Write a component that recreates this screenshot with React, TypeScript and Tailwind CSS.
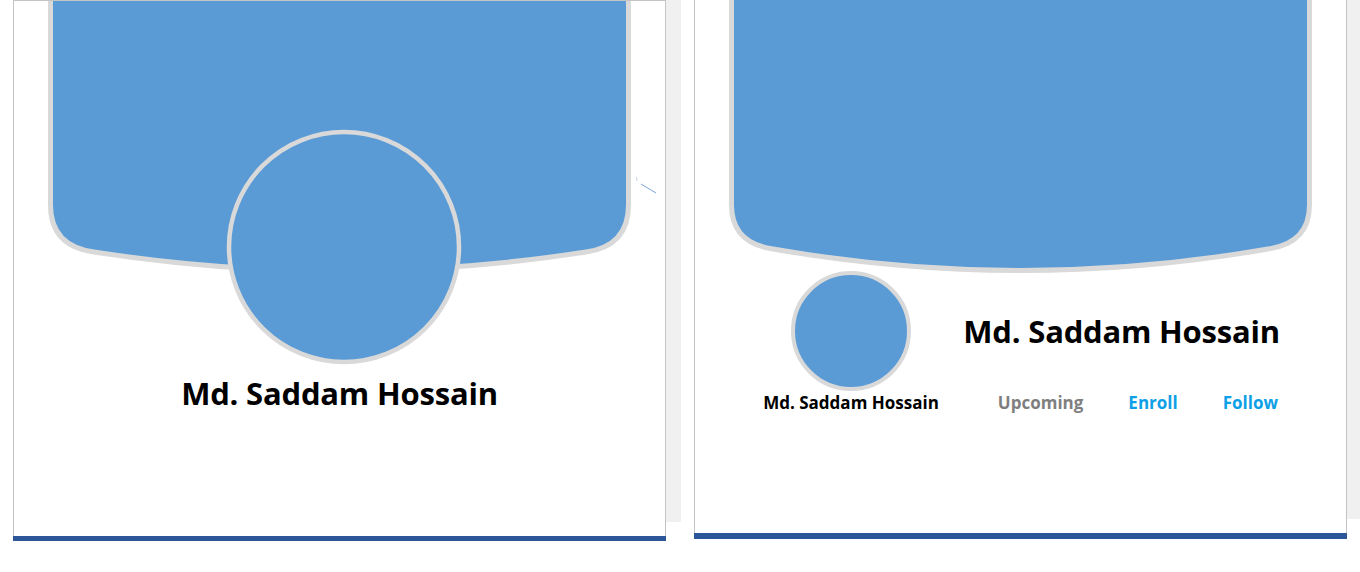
import React from 'react';

const FILL = '#5b9bd5';
const EDGE = '#d9d9d9';

const LeftCard: React.FC = () => (
    <div className="relative w-[653px] shrink-0 flex flex-col">
        <div className="h-[536px] border border-b-0 border-[#c4c4c4] flex flex-col">
            <svg width="651" height="367" viewBox="14 1 651 367" className="block">
                <path
                    d="M50.5,0 V205 Q50.5,246 94,252 Q340,290 586,252 Q628.5,246 628.5,205 V0"
                    fill={FILL}
                    stroke={EDGE}
                    strokeWidth="5"
                />
                <circle cx="344" cy="247" r="115" fill={FILL} stroke={EDGE} strokeWidth="4.5" />
                <line x1="636.5" y1="177" x2="637" y2="181" stroke="#c8d4e4" strokeWidth="1" />
                <line x1="641" y1="184" x2="656" y2="193" stroke="#7ea6d6" strokeWidth="1" />
            </svg>
            <div className="mt-[10px] text-center text-[31px] tracking-[-0.2px] leading-none font-bold text-black">
                Md. Saddam Hossain
            </div>
        </div>
        <div className="h-[5px] bg-[#2b579a]" />
    </div>
);

const RightCard: React.FC = () => (
    <div className="w-[653px] shrink-0 flex flex-col">
        <div className="h-[533px] border-l border-r border-[#c4c4c4] flex flex-col">
            <svg width="651" height="275" viewBox="695 0 651 275" className="block">
                <path
                    d="M731.5,0 V205 Q731.5,243 773,249 Q1020.5,292 1268,249 Q1309.5,243 1309.5,205 V0"
                    fill={FILL}
                    stroke={EDGE}
                    strokeWidth="5"
                />
            </svg>
            <div className="-mt-[4px] grid grid-cols-[190px_1fr] pl-[61px] pr-[66px]">
                <div className="flex justify-center">
                    <div className="w-[120px] h-[120px] rounded-full bg-[#5b9bd5] border-[4px] border-[#d9d9d9]" />
                </div>
                <div className="flex items-center justify-end text-[31px] tracking-[-0.2px] leading-none font-bold text-black">
                    Md. Saddam Hossain
                </div>
                <div className="mt-[3px] text-center text-[17px] leading-none font-bold text-black">
                    Md. Saddam Hossain
                </div>
                <div className="mt-[3px] mr-[2px] flex justify-end gap-[45px] text-[17px] leading-none font-bold">
                    <span className="text-[#7f7f7f]">Upcoming</span>
                    <span className="text-[#0ea0e6]">Enroll</span>
                    <span className="text-[#0ea0e6]">Follow</span>
                </div>
            </div>
        </div>
        <div className="h-[6px] bg-[#2b579a]" />
    </div>
);

export default function App() {
    return (
        <div className="w-[1360px] h-[572px] bg-white overflow-hidden font-['Open_Sans',sans-serif] flex items-start pl-[13px]">
            <LeftCard />
            <div className="w-[15px] h-[522px] bg-[#f0f0f0] shrink-0" />
            <div className="w-[13px] shrink-0" />
            <RightCard />
            <div className="w-[13px] h-[519px] bg-[#f0f0f0] shrink-0" />
        </div>
    );
}
